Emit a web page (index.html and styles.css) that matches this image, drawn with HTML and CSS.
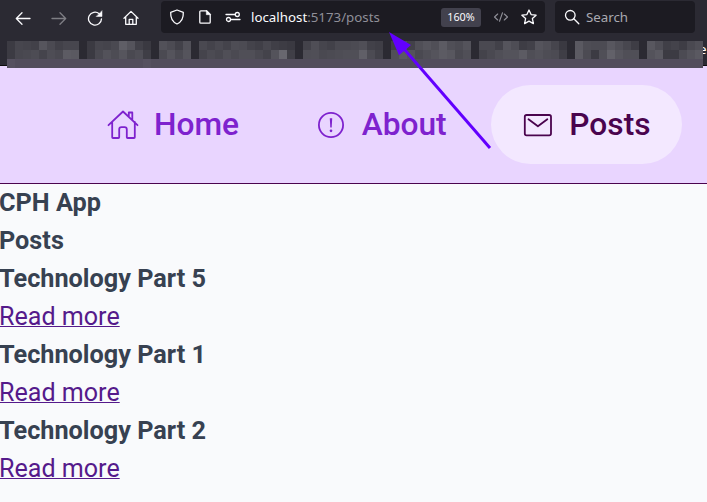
FILE: index.html
```html
<!DOCTYPE html>
<html lang="en">
<head>
<meta charset="utf-8">
<title>CPH App</title>
<link rel="stylesheet" href="styles.css">
</head>
<body>
<div class="browser">
  <div class="toolbar">
    <div class="controls">
      <svg width="16" height="16" viewBox="0 0 16 16"><path d="M15 8.5H1.5M7 2.8 1.3 8.5 7 14.2"/></svg>
      <svg class="disabled" width="16" height="16" viewBox="0 0 16 16"><path d="M1 8.5h13.5M9 2.8l5.7 5.7L9 14.2"/></svg>
      <svg width="16" height="16" viewBox="0 0 16 16"><path d="M14.5 8.8A6.5 6.5 0 1 1 12.2 3.7"/><path class="solid" d="M15 1v5.5H9.5z"/></svg>
      <svg width="16" height="16" viewBox="0 0 16 16"><path d="M1 8.2 8 1.4l7 6.8M2.7 6.8v7.5h10.6V6.8M6.2 14v-4.7h3.6V14"/></svg>
    </div>
    <div class="address">
      <svg width="16" height="16" viewBox="0 0 16 16"><path d="M8 1 14.3 3.4C14.6 9 12.5 13 8 15 3.5 13 1.4 9 1.7 3.4z"/></svg>
      <svg class="page-icon" width="16" height="16" viewBox="0 0 16 16"><path d="M3.8 1.8h5.7l3.7 3.7v7.7a1 1 0 0 1-1 1H3.8a1 1 0 0 1-1-1V2.8a1 1 0 0 1 1-1z"/><path class="solid" d="M9.3 1.5v4.2h4.2z"/></svg>
      <svg class="settings-icon" width="16" height="16" viewBox="0 0 16 16"><path d="M1 5.5h9M6 10.5h9"/><circle cx="12.3" cy="5.5" r="2"/><circle cx="3.5" cy="10.5" r="2"/></svg>
      <span class="url"><b>localhost</b>:5173/posts</span>
      <span class="zoom">160%</span>
      <svg class="code-icon" width="16" height="16" viewBox="0 0 16 16"><path d="M4.7 5 1.5 8l3.2 3M11.3 5l3.2 3-3.2 3M9.5 3.8l-3 8.4"/></svg>
      <svg class="star-icon" width="16" height="16" viewBox="0 0 16 16"><path d="m8 1 2.1 4.6 5 .6-3.7 3.4 1 5L8 12.1 3.6 14.6l1-5L.9 6.2l5-.6z"/></svg>
    </div>
    <div class="search">
      <svg width="16" height="16" viewBox="0 0 16 16"><circle cx="6.3" cy="6.3" r="4.8"/><path d="m9.8 9.8 5 5"/></svg>
      <span>Search</span>
    </div>
  </div>
  <div class="bookmarks"><span>e</span></div>
  <div class="mosaic" id="mosaic"></div>
</div>
<header class="site-header">
  <nav class="nav">
    <a class="nav-item" href="#">
      <svg width="32" height="32" viewBox="0 0 32 32"><path d="M1.5 16.2 16 2.5l14.5 13.7M5.2 13v15.2q0 .8.8.8h5.4q.8 0 .8-.8v-7.7q0-2.3 2.3-2.3h3q2.3 0 2.3 2.3v7.7q0 .8.8.8h6.4q.8 0 .8-.8V13M21.8 7.7V3.5h3.5v7.7"/></svg>
      <span>Home</span>
    </a>
    <a class="nav-item" href="#">
      <svg width="32" height="32" viewBox="0 0 32 32"><circle cx="16" cy="16" r="12.1"/><path class="mark" d="M14.8 9.2h2.4l-.5 9.4h-1.4z"/><circle class="mark" cx="16" cy="21.8" r="1.35"/></svg>
      <span>About</span>
    </a>
    <a class="nav-item active" href="#">
      <svg width="32" height="32" viewBox="0 0 32 32"><rect x="2.8" y="6" width="26.2" height="20.4" rx="1.8"/><path d="m6.5 10.3 9.4 7 9.4-7"/></svg>
      <span>Posts</span>
    </a>
  </nav>
</header>
<main class="content">
  <h1>CPH App</h1>
  <h2>Posts</h2>
  <h3>Technology Part 5</h3>
  <p><a href="#">Read more</a></p>
  <h3>Technology Part 1</h3>
  <p><a href="#">Read more</a></p>
  <h3>Technology Part 2</h3>
  <p><a href="#">Read more</a></p>
</main>
<svg class="arrow" width="110" height="125" viewBox="385 28 110 125"><path class="shaft" d="M404 49 490 148"/><path class="head" d="m389 32 22 13-12 10.2z"/></svg>
<script src="script.js"></script>
</body>
</html>
```
FILE: styles.css
```css
* { box-sizing: border-box; margin: 0; padding: 0; }
body {
  height: 502px;
  overflow: hidden;
  position: relative;
  background: #f9fafc;
  color: #374151;
  font: 25.1px/38px Roboto, sans-serif;
}
svg { display: block; flex: none; fill: none; stroke-linecap: round; stroke-linejoin: round; }
.browser {
  position: relative;
  height: 66px;
  background: #2b2a33;
  border-bottom: 1px solid #0c0c0d;
  color: #fbfbfe;
  font: 13.3px/20px "Noto Sans", sans-serif;
}
.toolbar { display: flex; height: 34px; padding-top: 1px; }
.toolbar svg { stroke: #fbfbfe; stroke-width: 1.3; }
.toolbar .solid { fill: #fbfbfe; stroke-width: .5; }
.controls { display: flex; align-items: center; gap: 20px; width: 161px; padding-left: 15px; }
.controls .disabled { opacity: .4; }
.address, .search { display: flex; align-items: center; height: 32px; border-radius: 4px; background: #1c1b22; }
.address { width: 384px; padding-left: 8px; }
.page-icon { margin-left: 12px; }
.settings-icon { margin-left: 12px; }
.url { width: 190px; margin-left: 10px; color: #8f8f98; white-space: nowrap; }
.url b { color: #fbfbfe; font-weight: 400; }
.zoom {
  width: 40px; height: 19px;
  border-radius: 3px;
  background: #42414d;
  font-size: 10.8px; line-height: 18px;
  text-align: center;
}
.toolbar .code-icon { margin-left: 12px; stroke: #8f8f98; stroke-width: 1.1; }
.star-icon { margin-left: 12px; }
.search { width: 140px; margin-left: 10px; padding-left: 9px; gap: 6px; color: #a9a9b1; }
.bookmarks { display: flex; justify-content: flex-end; padding-top: 5px; }
.bookmarks span { width: 8px; }
.mosaic {
  position: absolute; left: 7px; top: 41px;
  display: grid;
  grid-template-columns: repeat(87, 8px);
  grid-auto-rows: 9px;
}
.site-header {
  height: 118px;
  padding: 19px 25px 0 0;
  background: #e9d5ff;
  border-bottom: 1px solid #4a044e;
}
.nav { display: flex; justify-content: flex-end; gap: 13.2px; }
.nav-item {
  display: flex; align-items: center; gap: 15px;
  height: 79px;
  padding: 0 31.5px 0 31px;
  border-radius: 40px;
  color: #7e22ce;
  font-size: 31.7px; font-weight: 500;
  text-decoration: none;
}
.nav-item svg { stroke: currentColor; stroke-width: 1.8; }
.nav-item .mark { fill: currentColor; stroke: none; }
.nav-item.active { background: #f3e8ff; color: #4a044e; }
.content { margin-left: -1px; }
.content h1, .content h2, .content h3 { font-size: 25.25px; font-weight: 700; }
.content a { color: #551a8b; text-decoration-thickness: 1px; }
.arrow { position: absolute; left: 385px; top: 28px; }
.shaft { stroke: #6200ff; stroke-width: 3; stroke-linecap: butt; }
.head { fill: #6200ff; }
```
FILE: script.js
```js
// Lightness of every pixelated bookmark cell, one hex pair per cell.
const rows = [
  "3c474542564b4247472b3b47454a5f55423a2b524c42522b4a444a444e" + "4c444048403d3a2b" + "444f46424a4a4c50423f2b" + "404f425056505c504c542b" + "4a4a42554e3e425550463a2b" + "5a4e4c4c5850483e2b" + "584e40443e4a50",
  "3c484a4d454e4a5c5a2b3b4a534d564a4f3f2b4b554b552b454c48504b" + "50504a445468402b" + "4f504a4c4e5050604c422b" + "505a544a50555c584a502b" + "444a505454" + "5c4f534e4c3f2b" + "5c4c3c50625650502b" + "545a3c3c4c545a",
  "56" + "52".repeat(16) + "56" + "52".repeat(69)
];
const mosaic = document.getElementById("mosaic");
rows.forEach((row, index) => {
  for (const pair of row.match(/../g)) {
    const value = parseInt(pair, 16);
    const cell = document.createElement("span");
    cell.style.background = index === 2
      ? `rgb(${value},${value - 5},${value + 10})`
      : `rgb(${value},${value - 1},${value + 7})`;
    mosaic.appendChild(cell);
  }
});
```
